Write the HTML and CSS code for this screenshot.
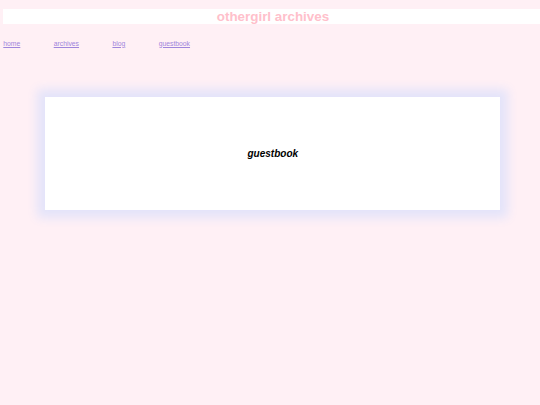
FILE: index.html
```html
<!DOCTYPE html>
<html>
<head>
<meta charset="utf-8">
<link rel="stylesheet" href="styles.css">
</head>
<body>
<header class="header"><h1 class="title">othergirl archives</h1></header>
<nav class="nav">
<a href="#">home</a>
<a href="#">archives</a>
<a href="#">blog</a>
<a href="#">guestbook</a>
</nav>
<div class="stage">
<main class="box"><h2 class="box-title">guestbook</h2></main>
</div>
</body>
</html>
```
FILE: styles.css
```css
html, body { margin: 0; }
html { background: #fff0f5; }
body {
  padding: 9px 0 0 3.3px;
  min-height: 100vh;
  box-sizing: border-box;
  font-family: "Liberation Sans", Arial, sans-serif;
}
.header {
  background: #fff;
  height: 15px;
  display: flex;
  align-items: center;
  justify-content: center;
  padding-left: 2.6px;
}
.title {
  margin: 0;
  color: #ffc0cb;
  font-weight: bold;
  font-size: 13.4px;
  line-height: 15px;
}
.nav {
  display: flex;
  gap: 33.4px;
  margin-top: 15.5px;
  font-size: 6.8px;
  line-height: 8px;
}
.nav a { color: #9f86dc; }
.stage {
  padding: 49.5px 0 40px 42px;
}
.box {
  width: 455px;
  height: 113px;
  background: #fff;
  box-shadow: 0 0 10px 8px #e4e4fa;
  display: flex;
  align-items: center;
  justify-content: center;
}
.box-title {
  margin: 0;
  font-size: 10px;
  font-style: italic;
  font-weight: bold;
  color: #000;
}
```
